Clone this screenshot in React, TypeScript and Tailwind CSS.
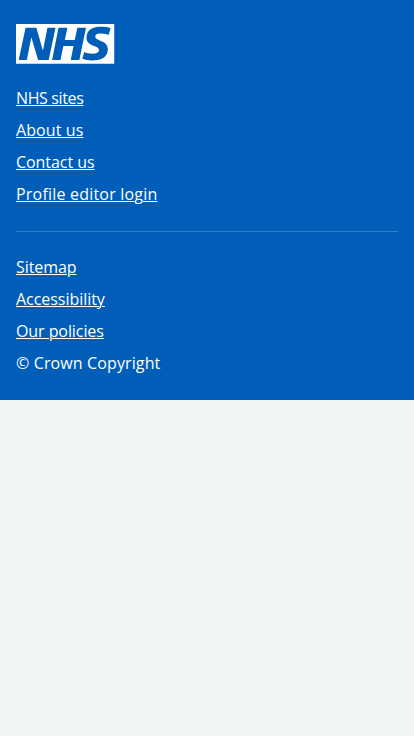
const primary = [
  { label: "NHS sites", tracking: "tracking-[-0.37px]" },
  { label: "About us", tracking: "tracking-[0.1px]" },
  { label: "Contact us", tracking: "tracking-[-0.06px]" },
  { label: "Profile editor login", tracking: "tracking-[0.2px]" },
];
const secondary = [
  { label: "Sitemap", tracking: "tracking-[-0.07px]" },
  { label: "Accessibility", tracking: "tracking-[-0.04px]" },
  { label: "Our policies", tracking: "tracking-[-0.08px]" },
];

function Logo() {
  return (
    <svg className="block h-10 w-[99px]" viewBox="0 0 99 40" role="img" aria-label="NHS">
      <g transform="scale(2.456 2.484)">
        <path fill="#fff" d="M0 0h40v16H0z" />
        <path fill="#005eb8" d="M3.9 1.5h4.4l2.6 9.1h.1l1.8-9.1h3.3l-2.8 13H9l-2.7-9h-.1l-1.8 9H1.1M17.3 1.5h3.6l-1 4.9h4L25 1.5h3.5l-2.7 13h-3.5l1.1-5.6h-4.1l-1.2 5.6h-3.4M37.7 4.4c-.7-.3-1.6-.6-2.9-.6-1.4 0-2.5.2-2.5 1.3 0 1.8 5.1 1.2 5.1 5.1 0 3.6-3.3 4.5-6.4 4.5-1.3 0-2.9-.3-4-.7l.8-2.7c.7.4 2.1.7 3.2.7s2.8-.2 2.8-1.5c0-2.1-5.1-1.3-5.1-5 0-3.4 2.9-4.4 5.8-4.4 1.6 0 3.1.2 4 .6" />
      </g>
    </svg>
  );
}

function Links({ items }: { items: { label: string; tracking: string }[] }) {
  return (
    <>
      {items.map((i) => (
        <li key={i.label} className="h-8 whitespace-nowrap">
          <a href="#" className={`inline-block underline decoration-1 underline-offset-1 ${i.tracking}`}>{i.label}</a>
        </li>
      ))}
    </>
  );
}

export default function App() {
  return (
    <div className="min-h-screen bg-[#f0f4f5] font-['Open_Sans','Noto_Sans',sans-serif] text-base leading-6 text-white">
      <footer className="h-[400px] bg-[#005eb8] px-4 pt-6">
        <Logo />
        <ul className="mt-[22px]"><Links items={primary} /></ul>
        <hr className="mt-[17px] border-t border-[#337ec6]" />
        <ul className="mt-[23px]"><Links items={secondary} /><li className="tracking-[0.12px]">© Crown Copyright</li></ul>
      </footer>
    </div>
  );
}
